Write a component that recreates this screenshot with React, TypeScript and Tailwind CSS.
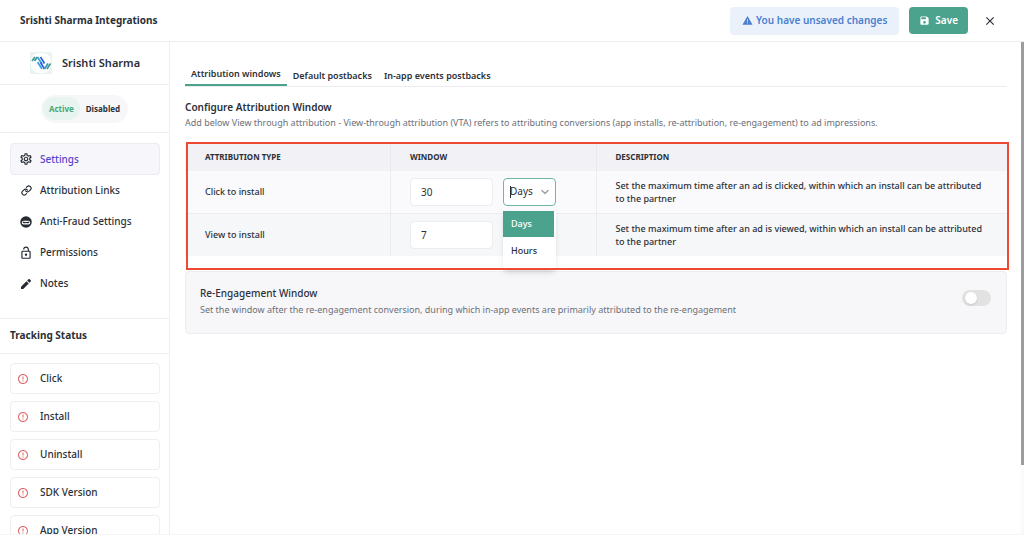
import type { ReactNode } from 'react';
import { FiLink } from 'react-icons/fi';
import { MdClose, MdOutlineLockOpen, MdOutlineSettings, MdSave, MdWarning } from 'react-icons/md';
import { RiErrorWarningLine } from 'react-icons/ri';
import { ChevronDown } from 'lucide-react';

const NinjaIcon = () => (
  <svg viewBox="0 0 24 24" className="h-3 w-3">
    <circle cx="12" cy="12" r="11.5" fill="#252a33" />
    <rect x="3.5" y="9.5" width="17" height="7.500" rx="3.500" fill="#fff" />
    <path d="M5.500 11l4.500 1.200h4l4.500-1.200v2.500l-2 1h-3l-1.500-.8-1.500.8h-3l-2-1z" fill="#252a33" />
  </svg>
);

const PencilIcon = () => (
  <svg viewBox="0 0 24 24" className="h-3 w-3" fill="#252a33">
    <path d="M2 17.500V22h4.500L17.500 11 13 6.500z" />
    <path d="M21.500 7c.7-.7.7-1.600 0-2.300l-2.200-2.200c-.7-.7-1.600-.7-2.300 0l-2.700 2.700 4.500 4.500z" />
  </svg>
);

const PartnerLogo = () => (
  <svg viewBox="0 0 22 22" className="h-[22px] w-[22px]">
    <rect width="22" height="22" rx="2" fill="#e9f3f0" />
    <rect x="1" y="1" width="20" height="20" rx="8" fill="#fff" />
    <g fill="none" strokeWidth="1.700">
      <path d="M2 9l3-4" stroke="#3f9c8c" />
      <path d="M4.500 9l3-4" stroke="#3c95a4" />
      <path d="M7.500 5l4.500 7" stroke="#3aa0d8" />
      <path d="M10.500 5l4 6.500" stroke="#2f62d8" />
      <path d="M7.500 10l4.500 7" stroke="#3aa0e8" />
      <path d="M10.500 10.500l4 6.500" stroke="#2f62d8" />
      <path d="M14.500 17l3.500-5.500" stroke="#3c95c4" />
      <path d="M17 17l3.500-5.500" stroke="#3f9c8c" />
    </g>
  </svg>
);

const menu: { label: string; icon: ReactNode; active?: boolean }[] = [
  { label: 'Settings', icon: <MdOutlineSettings className="h-3.5 w-3.5 shrink-0" />, active: true },
  { label: 'Attribution Links', icon: <FiLink strokeWidth={2.5} className="h-[11px] w-[11px] shrink-0" /> },
  { label: 'Anti-Fraud Settings', icon: <NinjaIcon /> },
  { label: 'Permissions', icon: <MdOutlineLockOpen className="h-3.5 w-3.5 shrink-0" /> },
  { label: 'Notes', icon: <PencilIcon /> },
];

const statuses = ['Click', 'Install', 'Uninstall', 'SDK Version', 'App Version'];

function Sidebar() {
  return (
    <aside className="flex w-[170px] shrink-0 flex-col overflow-hidden border-r border-[#f0f0f4]">
      <div className="flex h-[43px] shrink-0 items-center gap-2.5 border-b border-[#eeeff3] pl-[30px]">
        <PartnerLogo />
        <h2 className="text-[11px] font-semibold">Srishti Sharma</h2>
      </div>
      <div className="flex h-12 shrink-0 items-center justify-center border-b border-[#eeeff3]">
        <div className="flex h-7 items-center rounded-full bg-[#f7f7fa] px-0.5 text-[8px] font-bold">
          <button className="h-[23px] rounded-full bg-[#e8f4f0] px-1.5 text-[#45a876]">Active</button>
          <button className="h-[23px] px-1.5">Disabled</button>
        </div>
      </div>
      <nav className="shrink-0 border-b border-[#eeeff3] pt-2.5 pr-[9px] pb-[19px] pl-2.5">
        {menu.map((item) => (
          <a
            key={item.label}
            href="#"
            className={
              item.active
                ? 'flex h-8 items-center gap-2 rounded border border-[#ebebf1] bg-[#f7f7fb] pl-[9px] text-[10px] font-medium text-[#5644ca]'
                : 'flex h-[31px] items-center gap-2 border border-transparent pl-[9px] text-[10px] font-medium'
            }
          >
            <span className="flex w-3 justify-center text-[#252a33]">{item.icon}</span>
            {item.label}
          </a>
        ))}
      </nav>
      <h3 className="flex h-[35px] shrink-0 items-center border-b border-[#eeeff3] pb-0.5 pl-2.5 text-[10px] font-bold">
        Tracking Status
      </h3>
      <ul className="flex shrink-0 flex-col gap-[7px] pt-[9px] pr-[9px] pb-2.5 pl-2.5">
        {statuses.map((s) => (
          <li key={s} className="flex h-[31px] items-center gap-[11px] rounded border border-[#efeff3] pl-1.5 text-[10px] font-medium">
            <RiErrorWarningLine className="h-3 w-3 text-[#dc6663]" />
            {s}
          </li>
        ))}
      </ul>
    </aside>
  );
}

function UnitSelect() {
  return (
    <div className="relative">
      <select
        aria-label="Click to install unit"
        className="h-7 w-[53px] appearance-none rounded border border-[#6fb8a4] bg-white pl-1.5 text-[10px]"
      >
        <option>Days</option>
        <option>Hours</option>
      </select>
      <span className="absolute top-2 left-[7px] h-3 w-px bg-[#252a33]" />
      <ChevronDown strokeWidth={3} className="pointer-events-none absolute top-2 right-[5px] h-3 w-3 text-[#a3a3a3]" />
      <ul className="absolute top-[33px] left-0 z-10 h-[59px] w-[53px] rounded-b-sm bg-white text-[9px] font-medium shadow-md">
        <li className="flex h-[26px] w-[51px] items-center bg-[#4ba38e] pl-2 text-white">Days</li>
        <li className="flex h-[27px] items-center pl-2">Hours</li>
      </ul>
    </div>
  );
}

function WindowRow({ label, value, text, children, className }: { label: string; value: string; text: string; children?: ReactNode; className: string }) {
  return (
    <tr className={className}>
      <th scope="row" className="border-r border-[#ebebf0] px-5 text-left font-medium">{label}</th>
      <td className="border-r border-[#ebebf0] px-[19px]">
        <div className="flex gap-2.5">
          <input aria-label={label} defaultValue={value} className="h-7 w-[83px] rounded border border-[#ececf1] bg-white px-2.5 text-[10px]" />
          {children}
        </div>
      </td>
      <td className="pr-6 pl-[19px] leading-[13px] font-medium">{text}</td>
    </tr>
  );
}

function AttributionTable() {
  return (
    <div className="relative mt-[13px] pb-3.5">
      <table className="w-full table-fixed border-collapse text-[9px]">
        <thead>
          <tr className="h-7 bg-[#f2f1f6] text-left text-[8px]">
            <th className="w-1/4 border-r border-[#e9e9ee] px-5 font-bold">ATTRIBUTION TYPE</th>
            <th className="w-1/4 border-r border-[#e9e9ee] px-[19px] font-bold">WINDOW</th>
            <th className="w-1/2 px-[19px] font-bold">DESCRIPTION</th>
          </tr>
        </thead>
        <tbody>
          <WindowRow
            label="Click to install"
            value="30"
            text="Set the maximum time after an ad is clicked, within which an install can be attributed to the partner"
            className="h-[42px] border-b border-[#ebebf0] bg-[#fafafc]"
          >
            <UnitSelect />
          </WindowRow>
          <WindowRow
            label="View to install"
            value="7"
            text="Set the maximum time after an ad is viewed, within which an install can be attributed to the partner"
            className="h-[43px] bg-[#f6f7f9]"
          />
        </tbody>
      </table>
      <div className="pointer-events-none absolute -top-px -right-0.5 bottom-0 left-px z-20 border-2 border-[#ee4a31]" />
    </div>
  );
}

export default function App() {
  return (
    <div className="flex h-screen flex-col bg-white pb-[19px] font-['Noto_Sans',sans-serif] text-[#2b3038]">
      <header className="flex h-[42px] shrink-0 items-center border-b border-[#eeeef0] pr-[27px] pl-5">
        <h1 className="flex-1 text-[10px] font-bold">Srishti Sharma Integrations</h1>
        <div className="flex h-7 items-center gap-[3px] rounded bg-[#eaf1fa] px-3 text-[10px] font-semibold text-[#4a7fd0]">
          <MdWarning className="h-[11px] w-[11px]" />
          You have unsaved changes
        </div>
        <button className="ml-2.5 flex h-[27px] items-center gap-[5px] rounded bg-[#4ba38e] px-2.5 text-[10px] font-semibold text-white">
          <MdSave className="h-[11px] w-[11px]" />
          Save
        </button>
        <button aria-label="Close" className="ml-[15px]">
          <MdClose className="h-3.5 w-3.5" />
        </button>
      </header>
      <div className="flex min-h-0 flex-1 border-b border-[#f5f5f6]">
        <Sidebar />
        <main className="min-w-0 flex-1 pt-[21px] pr-3.5 pl-[15px]">
          <div className="flex h-6 border-b border-[#ececee] text-[9px] font-semibold">
            <button className="h-[23px] border-b-2 border-[#4ba38e] px-1.5">Attribution windows</button>
            <button className="px-1.5 pt-0.5">Default postbacks</button>
            <button className="px-1.5 pt-0.5">In-app events postbacks</button>
          </div>
          <h2 className="mt-[11px] text-[10px] leading-[18px] font-semibold">Configure Attribution Window</h2>
          <p className="text-[9px] leading-[14px] text-[#6c7078]">
            Add below View through attribution - View-through attribution (VTA) refers to attributing conversions (app installs, re-attribution, re-engagement) to ad impressions.
          </p>
          <AttributionTable />
          <section className="mt-px flex h-[63px] items-center justify-between rounded border border-[#ececf1] bg-[#f7f7fa] pr-[15px] pl-3.5">
            <div className="mb-1">
              <h3 className="text-[10px] leading-[18px] font-medium">Re-Engagement Window</h3>
              <p className="text-[9px] leading-4 text-[#6c7078]">
                Set the window after the re-engagement conversion, during which in-app events are primarily attributed to the re-engagement
              </p>
            </div>
            <label className="relative mb-2.5 h-4 w-[29px] rounded-full bg-[#e2e2e2]">
              <input type="checkbox" aria-label="Re-Engagement Window" className="absolute inset-0 appearance-none" />
              <span className="absolute top-0.5 left-[3px] h-3 w-3 rounded-full bg-white shadow" />
            </label>
          </section>
        </main>
        <div className="w-[3px] shrink-0 bg-[#fafafa]">
          <div className="h-[86%] bg-[#9c9c9c]" />
        </div>
      </div>
    </div>
  );
}
